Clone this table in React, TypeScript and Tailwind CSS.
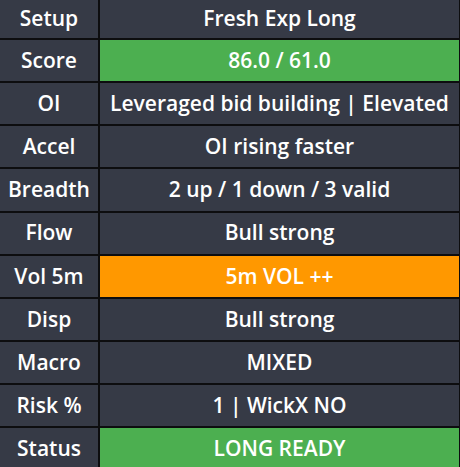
import React from "react";

type Row = { label: string; value: string; tone?: "green" | "orange" };

const rows: Row[] = [
  { label: "Setup", value: "Fresh Exp Long" },
  { label: "Score", value: "86.0 / 61.0", tone: "green" },
  { label: "OI", value: "Leveraged bid building | Elevated" },
  { label: "Accel", value: "OI rising faster" },
  { label: "Breadth", value: "2 up / 1 down / 3 valid" },
  { label: "Flow", value: "Bull strong" },
  { label: "Vol 5m", value: "5m VOL ++", tone: "orange" },
  { label: "Disp", value: "Bull strong" },
  { label: "Macro", value: "MIXED" },
  { label: "Risk %", value: "1 | WickX NO" },
  { label: "Status", value: "LONG READY", tone: "green" },
];

export default function App() {
  return (
    <div className="w-[460px] h-[467px] overflow-hidden bg-[#0d0d0f] font-['Open_Sans',sans-serif] font-semibold text-[21px] text-white">
      <div className="flex flex-col gap-[2px] pr-px">
        {rows.map((row, i) => (
          <div
            key={row.label}
            className={`flex gap-[2px] ${i === 0 ? "h-[38px]" : "h-[41.15px]"}`}
          >
            <div className="w-[98px] flex items-center justify-center bg-[#363a46]">
              {row.label}
            </div>
            <div
              className={`flex-1 flex items-center justify-center ${
                row.tone === "green"
                  ? "bg-[#4caf50]"
                  : row.tone === "orange"
                  ? "bg-[#ff9800]"
                  : "bg-[#363a46]"
              }`}
            >
              {row.value}
            </div>
          </div>
        ))}
      </div>
    </div>
  );
}
